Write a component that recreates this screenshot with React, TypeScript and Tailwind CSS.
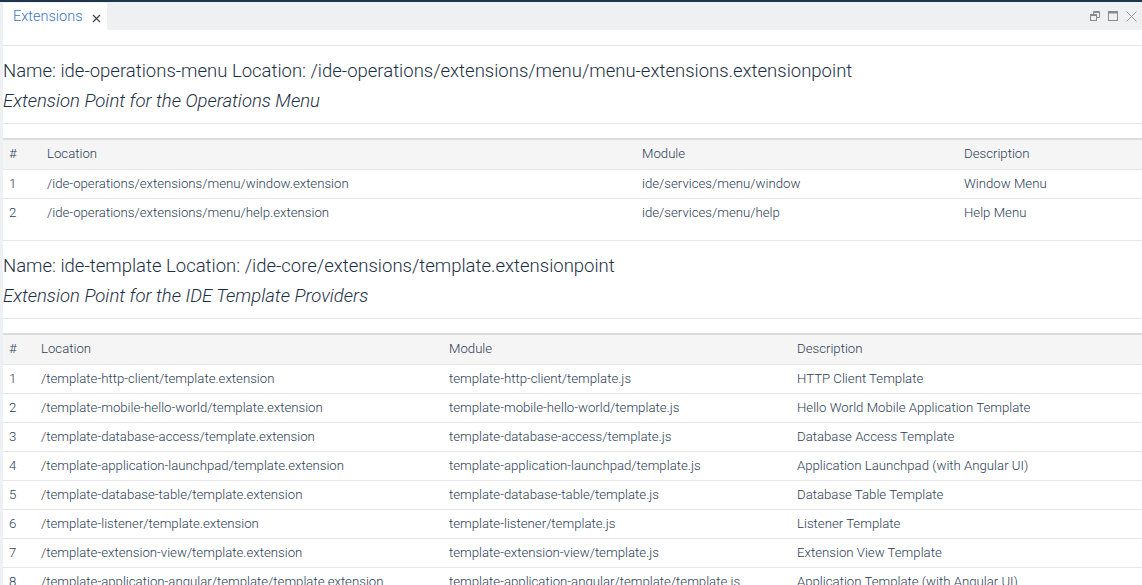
import React from 'react';

type Row = { location: string; module: string; description: string };

type ExtensionPoint = {
    name: string;
    location: string;
    description: string;
    cols: string[];
    rows: Row[];
};

const points: ExtensionPoint[] = [
    {
        name: 'ide-operations-menu',
        location: '/ide-operations/extensions/menu/menu-extensions.extensionpoint',
        description: 'Extension Point for the Operations Menu',
        cols: ['w-[38px]', 'w-[595px]', 'w-[322px]', ''],
        rows: [
            { location: '/ide-operations/extensions/menu/window.extension', module: 'ide/services/menu/window', description: 'Window Menu' },
            { location: '/ide-operations/extensions/menu/help.extension', module: 'ide/services/menu/help', description: 'Help Menu' },
        ],
    },
    {
        name: 'ide-template',
        location: '/ide-core/extensions/template.extensionpoint',
        description: 'Extension Point for the IDE Template Providers',
        cols: ['w-[32px]', 'w-[408px]', 'w-[348px]', ''],
        rows: [
            { location: '/template-http-client/template.extension', module: 'template-http-client/template.js', description: 'HTTP Client Template' },
            { location: '/template-mobile-hello-world/template.extension', module: 'template-mobile-hello-world/template.js', description: 'Hello World Mobile Application Template' },
            { location: '/template-database-access/template.extension', module: 'template-database-access/template.js', description: 'Database Access Template' },
            { location: '/template-application-launchpad/template.extension', module: 'template-application-launchpad/template.js', description: 'Application Launchpad (with Angular UI)' },
            { location: '/template-database-table/template.extension', module: 'template-database-table/template.js', description: 'Database Table Template' },
            { location: '/template-listener/template.extension', module: 'template-listener/template.js', description: 'Listener Template' },
            { location: '/template-extension-view/template.extension', module: 'template-extension-view/template.js', description: 'Extension View Template' },
            { location: '/template-application-angular/template/template.extension', module: 'template-application-angular/template/template.js', description: 'Application Template (with Angular UI)' },
        ],
    },
];

function PointSection({ point }: { point: ExtensionPoint }) {
    return (
        <section>
            {/* Title block */}
            <div className="border-t border-[#e6e6e6] pt-[10px] pb-[7px]">
                <h3 className="text-[18.5px] leading-[30px] font-light text-[#1d2f45]">
                    Name: {point.name} Location: {point.location}
                </h3>
                <p className="text-[18.5px] leading-[30px] italic font-light text-[#1d2f45]">{point.description}</p>
            </div>

            {/* Extensions table */}
            <div className="border-t border-[#e6e6e6] pt-[14px] pb-[13px]">
                <table className="w-full table-fixed border-collapse text-[13.2px] font-light text-[#2c3e55]">
                    <thead>
                        <tr className="bg-[#f5f5f5] border-t-2 border-[#dcdcdc]">
                            {['#', 'Location', 'Module', 'Description'].map((h, i) => (
                                <th key={h} className={`${point.cols[i]} h-[30px] pl-[6px] text-left font-light`}>
                                    {h}
                                </th>
                            ))}
                        </tr>
                    </thead>
                    <tbody>
                        {point.rows.map((r, i) => (
                            <tr key={r.location} className="border-t border-[#e6e6e6]">
                                <td className="h-[29px] pl-[6px]">{i + 1}</td>
                                <td className="h-[29px] pl-[6px] whitespace-nowrap">{r.location}</td>
                                <td className="h-[29px] pl-[6px] whitespace-nowrap">{r.module}</td>
                                <td className="h-[29px] pl-[6px] whitespace-nowrap">{r.description}</td>
                            </tr>
                        ))}
                    </tbody>
                </table>
            </div>
        </section>
    );
}

export default function App() {
    return (
        <div className="h-[585px] overflow-hidden bg-[#eef0f2] font-['Roboto','Liberation_Sans',Arial,sans-serif] border-t-2 border-[#1e3550] flex flex-col">
            {/* Tab bar */}
            <div className="h-[28px] flex items-end justify-between shrink-0">
                <div className="ml-[3px] h-[27px] w-[104px] bg-white flex items-center pl-[10px] gap-[9px]">
                    <span className="text-[14.5px] font-light text-[#3b76bd]">Extensions</span>
                    <svg width="9" height="9" viewBox="0 0 9 9" className="mt-[3px]" stroke="#444" strokeWidth="1.2">
                        <path d="M1 1L8 8M8 1L1 8" />
                    </svg>
                </div>
                <div className="flex items-center gap-[8px] self-center pr-[5px]">
                    <svg width="10" height="10" viewBox="0 0 10 10" fill="none" stroke="#8a8a8a" strokeWidth="1">
                        <rect x="0.5" y="3.5" width="6" height="6" />
                        <path d="M3.5 3.5V0.5H9.5V6.5H6.5" />
                        <path d="M0.5 4.5H6.5M3.5 1.5H9.5" />
                    </svg>
                    <svg width="10" height="10" viewBox="0 0 10 10" fill="none" stroke="#8a8a8a" strokeWidth="1">
                        <rect x="0.5" y="0.5" width="9" height="9" />
                        <path d="M0.5 1.5H9.5" strokeWidth="2" />
                    </svg>
                    <svg width="11" height="11" viewBox="0 0 11 11" stroke="#9a9a9a" strokeWidth="1">
                        <path d="M0.5 0.5L10.5 10.5M10.5 0.5L0.5 10.5" />
                    </svg>
                </div>
            </div>

            {/* Content */}
            <main className="flex-1 ml-[3px] bg-white overflow-hidden">
                <div className="pt-[15px]">
                    {points.map((p) => (
                        <PointSection key={p.name} point={p} />
                    ))}
                </div>
            </main>
        </div>
    );
}
